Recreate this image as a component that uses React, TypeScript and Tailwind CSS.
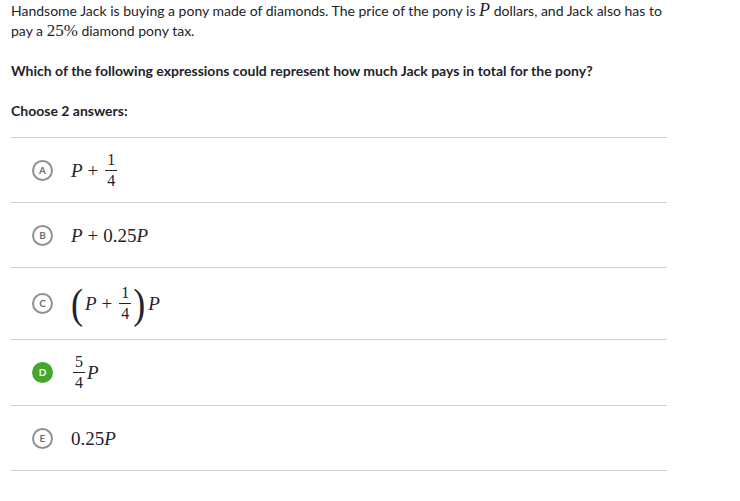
import type { ReactNode } from "react";

const mathFont = { fontFamily: '"Liberation Serif", "DejaVu Serif", serif' };

const V = ({ children }: { children: ReactNode }) => (
  <span className="italic">{children}</span>
);

const Plus = () => <span className="mx-[5px]">+</span>;

const Frac = ({ num, den }: { num: string; den: string }) => (
  <span className="inline-flex flex-col items-center align-middle text-[16px] leading-[14px] mx-[2px]">
    <span className="px-[2px]">{num}</span>
    <span className="h-[1px] w-full bg-[#21242c] my-[3px]"></span>
    <span className="px-[2px]">{den}</span>
  </span>
);

type Choice = {
  letter: string;
  selected?: boolean;
  row: string;
  content: ReactNode;
};

const choices: Choice[] = [
  {
    letter: "A",
    row: "h-[65px]",
    content: (
      <span className="flex items-center">
        <V>P</V>
        <Plus />
        <Frac num="1" den="4" />
      </span>
    ),
  },
  {
    letter: "B",
    row: "h-[65px]",
    content: (
      <span className="flex items-center">
        <V>P</V>
        <Plus />
        <span>0.25</span>
        <V>P</V>
      </span>
    ),
  },
  {
    letter: "C",
    row: "h-[72px]",
    content: (
      <span className="flex items-center">
        <span className="text-[36px] leading-none font-light scale-y-[1.2] mr-[2px]">(</span>
        <V>P</V>
        <Plus />
        <Frac num="1" den="4" />
        <span className="text-[36px] leading-none font-light scale-y-[1.2] mr-[3px]">)</span>
        <V>P</V>
      </span>
    ),
  },
  {
    letter: "D",
    selected: true,
    row: "h-[66px]",
    content: (
      <span className="flex items-center">
        <Frac num="5" den="4" />
        <V>P</V>
      </span>
    ),
  },
  {
    letter: "E",
    row: "h-[65px]",
    content: (
      <span className="flex items-center">
        <span>0.25</span>
        <V>P</V>
      </span>
    ),
  },
];

export default function App() {
  return (
    <div
      className="w-[740px] h-[501px] bg-white text-[#21242c] overflow-hidden"
      style={{ fontFamily: 'Lato, "Open Sans", sans-serif' }}
    >
      <div className="pl-[11px] pt-[1px] w-[667px]">
        <p className="text-[14px] leading-[20px]">
          Handsome Jack is buying a pony made of diamonds. The price of the pony is{" "}
          <span className="italic text-[18px] leading-none" style={mathFont}>
            P
          </span>{" "}
          dollars, and Jack also has to
          <br />
          pay a{" "}
          <span className="text-[17px] leading-none" style={mathFont}>
            25%
          </span>{" "}
          diamond pony tax.
        </p>
        <p className="text-[14px] leading-[20px] font-bold mt-[20px]">
          Which of the following expressions could represent how much Jack pays in total for the pony?
        </p>
        <p className="text-[14px] leading-[20px] font-bold mt-[20px]">Choose 2 answers:</p>

        <div className="mt-[16px] border-t border-[#cfcfcf]">
          {choices.map((c) => (
            <div
              key={c.letter}
              className={`flex items-center border-b border-[#cfcfcf] ${c.row}`}
            >
              <span
                className={`ml-[21px] w-[21px] h-[21px] rounded-full flex items-center justify-center text-[10px] font-bold ${
                  c.selected
                    ? "bg-[#46a62c] text-white"
                    : "border-2 border-[#8e9094] text-[#6b6e73]"
                }`}
              >
                {c.letter}
              </span>
              <span className="ml-[18px] text-[19px] leading-none" style={mathFont}>
                {c.content}
              </span>
            </div>
          ))}
        </div>
      </div>
    </div>
  );
}
